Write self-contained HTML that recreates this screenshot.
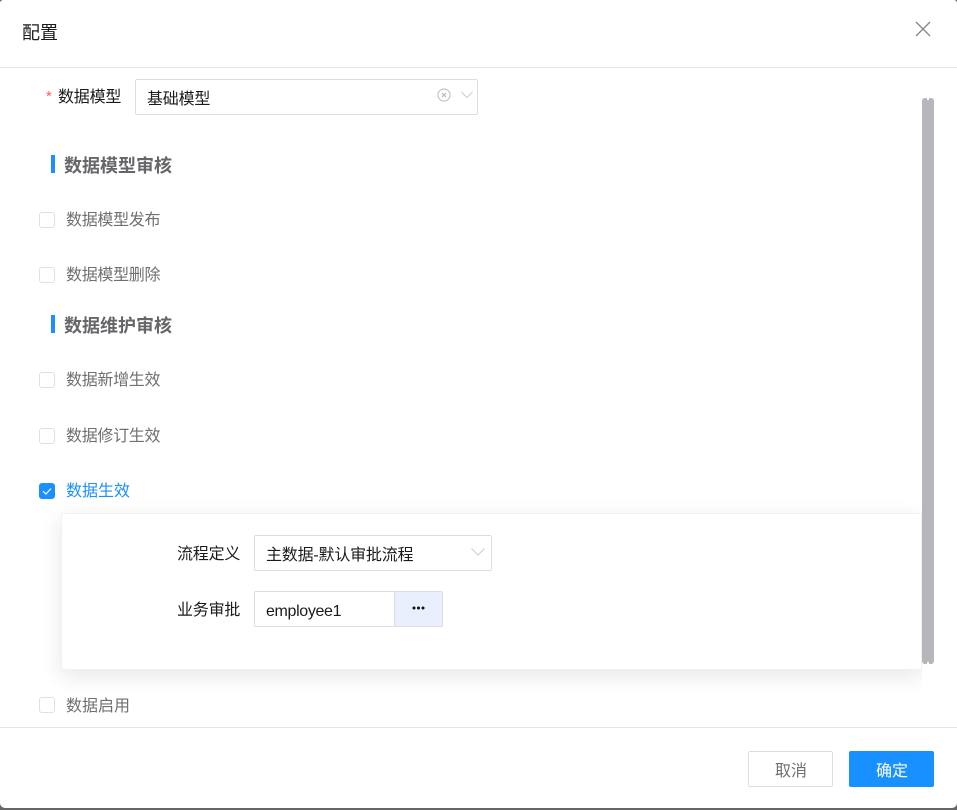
<!DOCTYPE html>
<html lang="zh">
<head>
<meta charset="utf-8">
<style>
*{box-sizing:border-box}
html,body{margin:0;padding:0}
body{width:957px;height:810px;overflow:hidden;background:#666;position:relative;font-family:"Liberation Sans","Noto Sans CJK SC",sans-serif;font-size:16px;color:#1b1b1b}
.modal{position:absolute;left:0;top:0;width:957px;height:808px;background:#fff;border-radius:3px 3px 5px 5px}
.a{position:absolute;white-space:nowrap;line-height:22px}
.hr{position:absolute;left:0;width:957px;height:1px;background:#e6e6e9}
.box{position:absolute;background:#fff;border:1px solid #dcdde4;border-radius:2px}
.cb{position:absolute;left:39px;width:16px;height:16px;background:#fff;border:1px solid #dfe0e6;border-radius:3px}
.lb{color:#6f6f72;left:66px;letter-spacing:-.3px}
.h{left:64px;font-size:18px;font-weight:bold;color:#66666a}
.bar{position:absolute;left:51px;width:4px;height:18px;background:#1890ff}
</style>
</head>
<body>
<div class="modal">
<div class="a" style="left:22px;top:22px;font-size:18px">配置</div>
<svg class="a" style="left:914px;top:20px" width="18" height="18" viewBox="0 0 18 18"><path d="M2 2L16 16M16 2L2 16" stroke="#85858c" stroke-width="1.3" fill="none"/></svg>
<div class="hr" style="top:67px"></div>

<div class="a" style="left:46px;top:86px;color:#ff5a5f;font-size:15px">*</div>
<div class="a" style="left:58px;top:87px;letter-spacing:-.2px">数据模型</div>
<div class="box" style="left:135px;top:79px;width:343px;height:36px"></div>
<div class="a" style="left:147px;top:89px;letter-spacing:-.2px">基础模型</div>
<svg class="a" style="left:436px;top:87px" width="16" height="16" viewBox="0 0 16 16"><circle cx="8" cy="8" r="6" stroke="#c4c5cd" stroke-width="1.2" fill="none"/><path d="M6 6L10 10M10 6L6 10" stroke="#b5b6bf" stroke-width="1.2"/></svg>
<svg class="a" style="left:460px;top:90px" width="14" height="10" viewBox="0 0 14 10"><path d="M1.5 2L7 7.5L12.5 2" stroke="#d0d1d8" stroke-width="1.2" fill="none"/></svg>

<div class="bar" style="top:155px"></div>
<div class="a h" style="top:155px">数据模型审核</div>
<div class="cb" style="top:212px"></div>
<div class="a lb" style="top:210px">数据模型发布</div>
<div class="cb" style="top:267px"></div>
<div class="a lb" style="top:265px">数据模型删除</div>

<div class="bar" style="top:315px"></div>
<div class="a h" style="top:315px">数据维护审核</div>
<div class="cb" style="top:372px"></div>
<div class="a lb" style="top:370px">数据新增生效</div>
<div class="cb" style="top:428px"></div>
<div class="a lb" style="top:426px">数据修订生效</div>
<div class="cb" style="top:483px;background:#1890ff;border-color:#1890ff"></div>
<svg class="a" style="left:39px;top:483px" width="16" height="16" viewBox="0 0 16 16"><path d="M4 8.2L7 11L12 5.5" stroke="#fff" stroke-width="1.2" fill="none"/></svg>
<div class="a lb" style="top:481px;color:#1890ff;letter-spacing:0">数据生效</div>

<div style="position:absolute;left:922px;top:98px;width:12px;height:566px;background:#b6b6bb;border-radius:3px"></div>
<div style="position:absolute;left:927px;top:98px;width:2px;height:2px;background:#fff"></div>
<div style="position:absolute;left:927px;top:662px;width:2px;height:2px;background:#fff"></div>

<div style="position:absolute;left:61px;top:513px;width:861px;height:157px;background:#fff;border:1px solid #f1f1f5;box-shadow:0 6px 20px rgba(40,40,70,.11);clip-path:inset(-30px 0 -30px -30px)"></div>
<div class="a" style="left:177px;top:544px;letter-spacing:-.2px">流程定义</div>
<div class="box" style="left:254px;top:535px;width:238px;height:36px"></div>
<div class="a" style="left:266px;top:545px;letter-spacing:-.2px">主数据-默认审批流程</div>
<svg class="a" style="left:470px;top:546px" width="16" height="12" viewBox="0 0 16 12"><path d="M1.5 2.5L8 9L14.5 2.5" stroke="#d0d1d8" stroke-width="1.2" fill="none"/></svg>
<div class="a" style="left:177px;top:600px;letter-spacing:-.2px">业务审批</div>
<div class="box" style="left:254px;top:591px;width:141px;height:36px;border-radius:2px 0 0 2px"></div>
<div class="a" style="left:266px;top:601px;letter-spacing:-.35px">employee1</div>
<div class="box" style="left:394px;top:591px;width:49px;height:36px;background:#e9effc;border-radius:0 2px 2px 0"></div>
<svg class="a" style="left:411px;top:605px" width="16" height="6" viewBox="0 0 16 6"><circle cx="3" cy="3" r="1.5" fill="#111"/><circle cx="7.5" cy="3" r="1.5" fill="#111"/><circle cx="12" cy="3" r="1.5" fill="#111"/></svg>

<div class="cb" style="top:697px"></div>
<div class="a lb" style="top:695px;letter-spacing:0;margin-top:1px">数据启用</div>

<div class="hr" style="top:727px"></div>
<div class="box" style="left:748px;top:751px;width:85px;height:36px"></div>
<div class="a" style="left:775px;top:761px;color:#6f6f72">取消</div>
<div style="position:absolute;left:849px;top:751px;width:85px;height:36px;background:#1890ff;border-radius:2px"></div>
<div class="a" style="left:876px;top:761px;color:#fff">确定</div>
</div>
</body>
</html>
